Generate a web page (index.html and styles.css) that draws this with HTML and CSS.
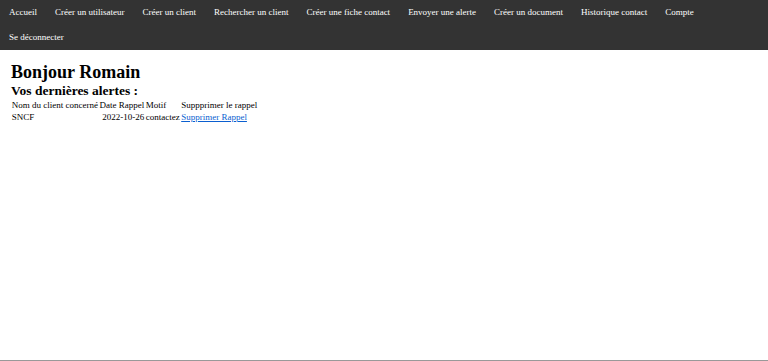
FILE: index.html
```html
<!DOCTYPE html>
<html lang="fr">
<head>
    <meta charset="UTF-8">
    <meta name="viewport" content="width=device-width, initial-scale=1.0">
    <title>Accueil</title>
    <link rel="stylesheet" href="styles.css">
</head>
<body>
    <div class="page">
        <ul class="topnav">
            <li><a href="#">Accueil</a></li>
            <li><a href="#">Créer un utilisateur</a></li>
            <li><a href="#">Créer un client</a></li>
            <li><a href="#">Rechercher un client</a></li>
            <li><a href="#">Créer une fiche contact</a></li>
            <li><a href="#">Envoyer une alerte</a></li>
            <li><a href="#">Créer un document</a></li>
            <li><a href="#">Historique contact</a></li>
            <li><a href="#">Compte</a></li>
            <li><a href="#">Se déconnecter</a></li>
        </ul>
        <div class="content">
            <h1>Bonjour Romain</h1>
            <h2>Vos dernières alertes :</h2>
            <table class="alerts">
                <tr>
                    <td>Nom du client concerné</td>
                    <td>Date Rappel</td>
                    <td>Motif</td>
                    <td>Suppprimer le rappel</td>
                </tr>
                <tr>
                    <td>SNCF</td>
                    <td class="right">2022-10-26</td>
                    <td class="center">contactez</td>
                    <td><a href="#">Supprimer Rappel</a></td>
                </tr>
            </table>
        </div>
    </div>
</body>
</html>
```

FILE: styles.css
```css
body {
    margin: 0;
    font-family: "Liberation Serif", "Times New Roman", serif;
    font-size: 9px;
    color: #000;
    background: #fff;
}

.page {
    height: 360px;
    border-bottom: 1px solid #999;
}

.topnav {
    list-style: none;
    margin: 0;
    padding: 0;
    display: flex;
    flex-wrap: wrap;
    background: #333;
    height: 50px;
    align-content: flex-start;
}

.topnav li a {
    display: block;
    color: #fff;
    text-decoration: none;
    padding: 7px 9px;
    line-height: 11px;
}

.content {
    padding: 0 11px;
}

.content h1 {
    font-size: 18px;
    margin: 12px 0 0 0;
    line-height: 20px;
}

.content h2 {
    font-size: 13.5px;
    margin: 1px 0 0 0;
    line-height: 16px;
}

.alerts {
    border-spacing: 0;
    margin-top: 0;
}

.alerts td {
    padding: 0 0.75px;
    line-height: 12px;
}

.alerts .right {
    text-align: right;
}

.alerts .center {
    text-align: center;
}

.alerts a {
    color: #0b5fd0;
}
```
